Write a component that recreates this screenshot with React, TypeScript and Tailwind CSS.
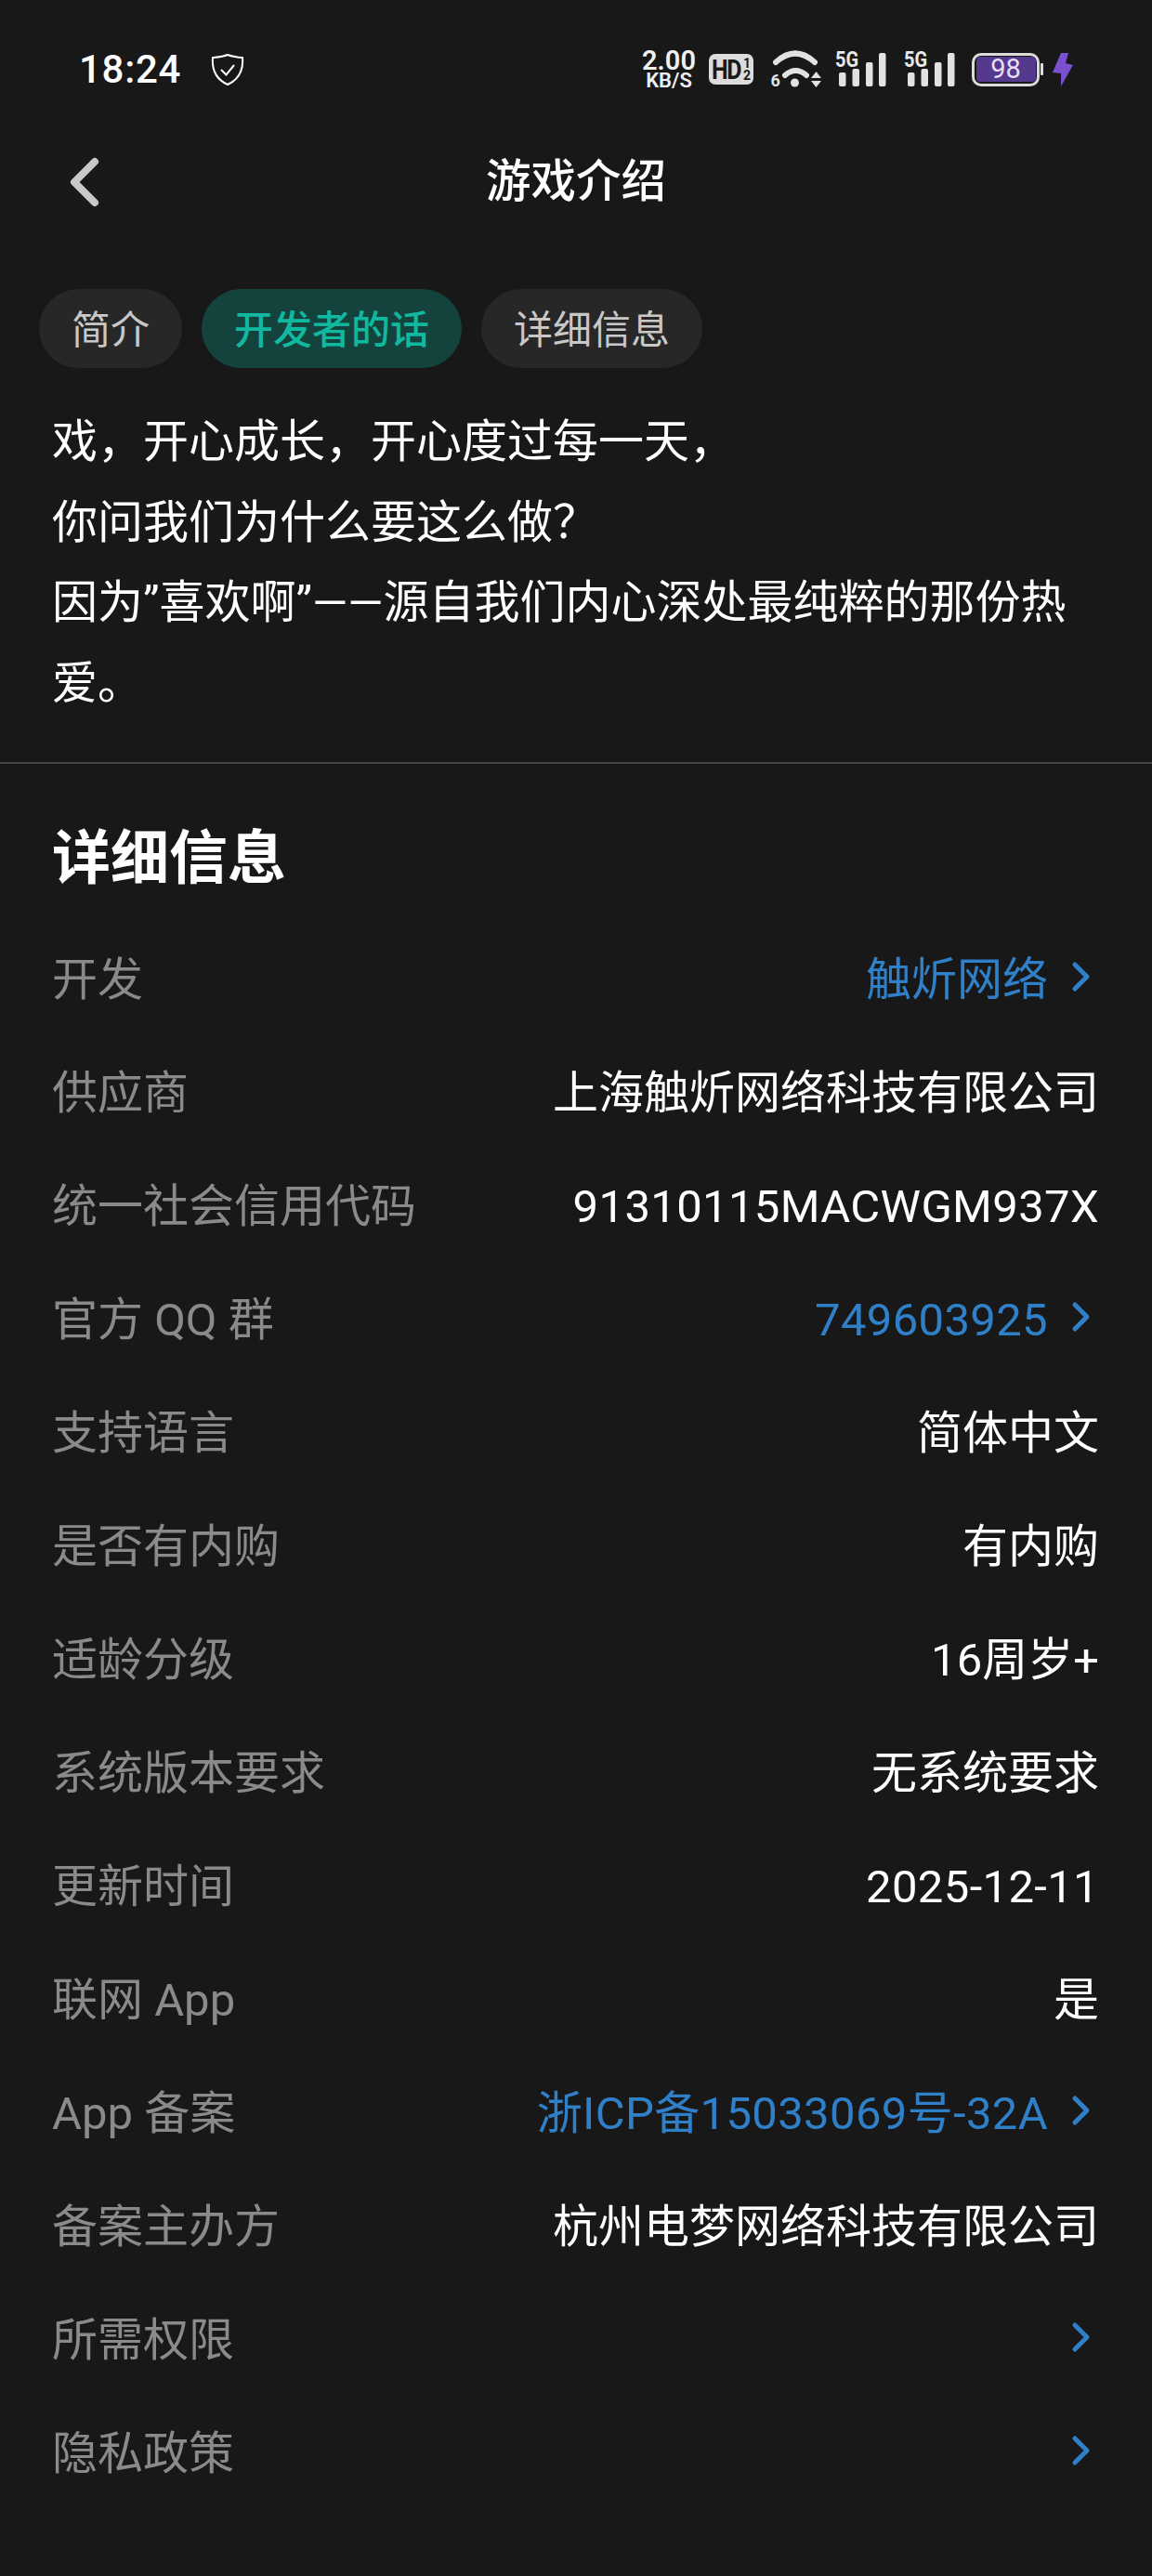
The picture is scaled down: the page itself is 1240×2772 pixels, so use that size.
import React from "react";

const sans = "font-['Roboto','Noto_Sans_CJK_SC','Noto_Sans',sans-serif]";

function Chevron() {
  return (
    <svg width="22" height="36" viewBox="0 0 22 36" className="shrink-0">
      <path d="M4 5 L17 18 L4 31" fill="none" stroke="#2f80c8" strokeWidth="5" strokeLinecap="round" strokeLinejoin="round" />
    </svg>
  );
}

function Signal() {
  return (
    <div className="relative w-[55px] h-[38px]">
      <svg width="55" height="38" viewBox="0 0 55 38" className="absolute left-0 top-0">
        <rect x="4" y="22" width="7.5" height="15" rx="2" fill="#e2e2e2" />
        <rect x="18.5" y="18" width="7.5" height="19" rx="2" fill="#e2e2e2" />
        <rect x="33" y="11" width="7.5" height="26" rx="2" fill="#e2e2e2" />
        <rect x="47" y="1" width="7.5" height="36" rx="2" fill="#e2e2e2" />
      </svg>
      <span className="absolute left-0 top-[-4px] text-[20px] leading-[20px] font-bold text-[#e8e8e8] scale-y-120 origin-top">5G</span>
    </div>
  );
}

function StatusBar() {
  return (
    <div className="flex items-center justify-between h-[149px] pl-[85px] pr-[85px]">
      <div className="flex items-center gap-[32px]">
        <span className="text-[42px] leading-[50px] font-medium text-white tracking-[0.7px]">18:24</span>
        <svg width="36" height="36" viewBox="0 0 36 36" fill="none" stroke="#fff" strokeWidth="2">
          <path d="M18 2 C23 4 29 4.5 34 5 C35 17 31 28 18 34 C5 28 1 17 2 5 C7 4.5 13 4 18 2 Z" />
          <path d="M11 18 L16.5 23.5 L25 13" />
        </svg>
      </div>
      <div className="flex items-center">
        <div className="flex flex-col items-center w-[60px] text-[#f0f0f0] font-semibold">
          <span className="text-[29px] leading-[25px]">2.00</span>
          <span className="text-[22px] leading-[18px]">KB/S</span>
        </div>
        <div className="ml-[13px] w-[48px] h-[33px] rounded-[7px] bg-[#dcdcdc] flex items-center pl-[3px] text-[#1a1a1a] font-bold">
          <span className="text-[25px] leading-none tracking-[-1.5px] scale-y-120">HD</span>
          <span className="flex flex-col items-center ml-[3px] text-[14px] leading-[13px]">
            <span>1</span>
            <span>2</span>
          </span>
        </div>
        <svg width="56" height="42" viewBox="0 0 56 42" className="ml-[19px]">
          <path d="M5 13 Q26 -6 47 13" fill="none" stroke="#e2e2e2" strokeWidth="6" strokeLinecap="round" />
          <path d="M15 27 Q26.5 17 38 27" fill="none" stroke="#e2e2e2" strokeWidth="6" strokeLinecap="round" />
          <circle cx="25.5" cy="35" r="4.5" fill="#e2e2e2" />
          <path d="M43 30 L48.5 23 L54 30 Z M43 33 L54 33 L48.5 40 Z" fill="#e2e2e2" />
          <text x="-0.5" y="39" fontSize="18" fontWeight="700" fill="#e2e2e2">6</text>
        </svg>
        <div className="ml-[13px]"><Signal /></div>
        <div className="ml-[19px]"><Signal /></div>
        <div className="ml-[18px] flex items-center">
          <div className="w-[73px] h-[36px] rounded-[10px] border-[3px] border-[#dcdcdc] p-[1.5px]">
            <div className="h-full rounded-[4px] bg-[#55398f] flex items-center justify-center text-[29px] leading-none text-[#e8def8]">98</div>
          </div>
          <div className="ml-[1px] w-[3px] h-[13px] bg-[#dcdcdc] rounded-[1px]" />
        </div>
        <svg width="22" height="36" viewBox="0 0 22 36" className="ml-[10px]">
          <path d="M9 0 L17 0 L14 11 L22 13 L9 36 L9 22 L0 21 Z" fill="#7a4fd0" />
        </svg>
      </div>
    </div>
  );
}

function Row({ label, value, link, latin }: { label: string; value?: string; link?: boolean; latin?: boolean }) {
  return (
    <div className="flex items-center justify-between h-[122px]">
      <span className="text-[49px] leading-[60px] text-[#8a8a8a]">{label}</span>
      <div className="flex items-center">
        {value && (
          <span className={`text-[49px] leading-[60px] ${latin ? "tracking-[0.35px]" : ""} ${link ? "text-[#2f80c8]" : "text-white"}`}>
            {value}
          </span>
        )}
        {link && <div className="ml-[25px] mr-[8px] -mt-[8px]"><Chevron /></div>}
      </div>
    </div>
  );
}

const rows: { label: string; value?: string; link?: boolean; latin?: boolean }[] = [
  { label: "开发", value: "触炘网络", link: true },
  { label: "供应商", value: "上海触炘网络科技有限公司" },
  { label: "统一社会信用代码", value: "91310115MACWGM937X", latin: true },
  { label: "官方 QQ 群", value: "749603925", link: true, latin: true },
  { label: "支持语言", value: "简体中文" },
  { label: "是否有内购", value: "有内购" },
  { label: "适龄分级", value: "16周岁+" },
  { label: "系统版本要求", value: "无系统要求" },
  { label: "更新时间", value: "2025-12-11", latin: true },
  { label: "联网 App", value: "是" },
  { label: "App 备案", value: "浙ICP备15033069号-32A", link: true, latin: true },
  { label: "备案主办方", value: "杭州电梦网络科技有限公司" },
  { label: "所需权限", link: true },
  { label: "隐私政策", link: true },
];

export default function App() {
  return (
    <div className={`w-[1240px] h-[2772px] overflow-hidden bg-[#181818] ${sans}`}>
      <StatusBar />
      <div className="relative flex items-center justify-center h-[94px]">
        <svg width="34" height="54" viewBox="0 0 34 54" className="absolute left-[74px] top-[20px]">
          <path d="M28 5 L6 27 L28 49" fill="none" stroke="#c8c8c8" strokeWidth="8" strokeLinecap="round" strokeLinejoin="round" />
        </svg>
        <span className="text-[48.5px] leading-[60px] font-medium text-white">游戏介绍</span>
      </div>
      <div className="flex gap-[21px] pl-[42px] mt-[68px]">
        <div className="h-[85px] rounded-full bg-[#272727] px-[35px] pt-[4px] flex items-center text-[42px] text-[#c8c8c8]">简介</div>
        <div className="h-[85px] rounded-full bg-[#14433d] px-[35px] pt-[4px] flex items-center text-[42px] text-[#10b8a0] font-medium">开发者的话</div>
        <div className="h-[85px] rounded-full bg-[#272727] px-[35px] pt-[4px] flex items-center text-[42px] text-[#c8c8c8]">详细信息</div>
      </div>
      <div className="pl-[56px] pr-[57px] mt-[37px] h-[387px] text-[49px] leading-[86.5px] text-white">
        <p>戏，开心成长，开心度过每一天，</p>
        <p>你问我们为什么要这么做？</p>
        <p>因为”喜欢啊”——源自我们内心深处最纯粹的那份热</p>
        <p>爱。</p>
      </div>
      <div className="h-[2px] bg-[#444444]" />
      <div className="pl-[56px] pr-[57px]">
        <h2 className="mt-[66px] text-[63px] leading-[72px] font-bold text-white">详细信息</h2>
        <div className="mt-[34px]">
          {rows.map((r) => (
            <Row key={r.label} {...r} />
          ))}
        </div>
      </div>
    </div>
  );
}
